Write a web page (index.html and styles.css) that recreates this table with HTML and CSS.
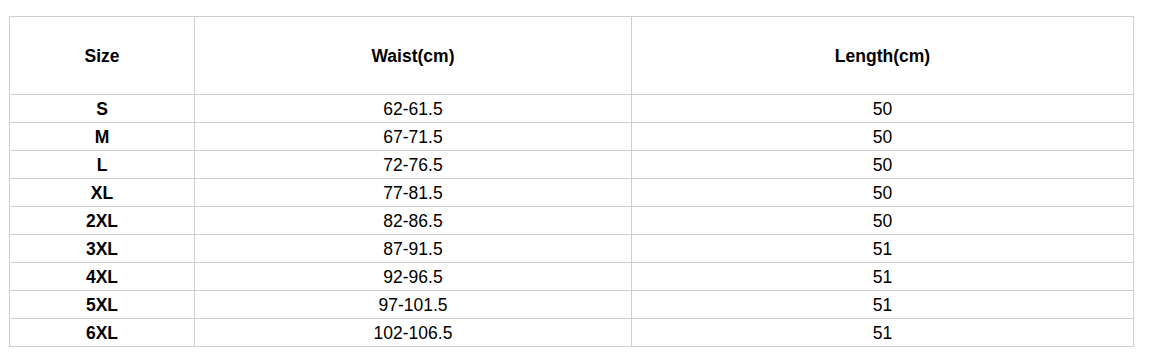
FILE: index.html
```html
<!DOCTYPE html>
<html lang="en">
<head>
<meta charset="utf-8">
<title>Size chart</title>
<link rel="stylesheet" href="styles.css">
</head>
<body>
<table class="size-table">
  <colgroup>
    <col class="c-size">
    <col class="c-waist">
    <col class="c-length">
  </colgroup>
  <thead>
    <tr class="head-row"><th>Size</th><th>Waist(cm)</th><th>Length(cm)</th></tr>
  </thead>
  <tbody>
    <tr><th>S</th><td>62-61.5</td><td>50</td></tr>
    <tr><th>M</th><td>67-71.5</td><td>50</td></tr>
    <tr><th>L</th><td>72-76.5</td><td>50</td></tr>
    <tr><th>XL</th><td>77-81.5</td><td>50</td></tr>
    <tr><th>2XL</th><td>82-86.5</td><td>50</td></tr>
    <tr><th>3XL</th><td>87-91.5</td><td>51</td></tr>
    <tr><th>4XL</th><td>92-96.5</td><td>51</td></tr>
    <tr><th>5XL</th><td>97-101.5</td><td>51</td></tr>
    <tr><th>6XL</th><td>102-106.5</td><td>51</td></tr>
  </tbody>
</table>
</body>
</html>
```
FILE: styles.css
```css
html, body {
  margin: 0;
  background: #fff;
}
body {
  padding: 16px 0 0 9px;
  font-family: "Liberation Sans", Arial, sans-serif;
  font-size: 17.5px;
  color: #000;
}
.size-table {
  border-collapse: collapse;
  table-layout: fixed;
  width: 1124px;
}
.c-size { width: 185px; }
.c-waist { width: 437px; }
.c-length { width: 502px; }
.size-table th,
.size-table td {
  border: 1px solid #cfcfcf;
  padding: 0;
  text-align: center;
  vertical-align: middle;
  height: 27px;
  line-height: 20px;
}
.size-table th { font-weight: bold; }
.size-table td { font-weight: normal; }
.head-row th { height: 77px; }
```
